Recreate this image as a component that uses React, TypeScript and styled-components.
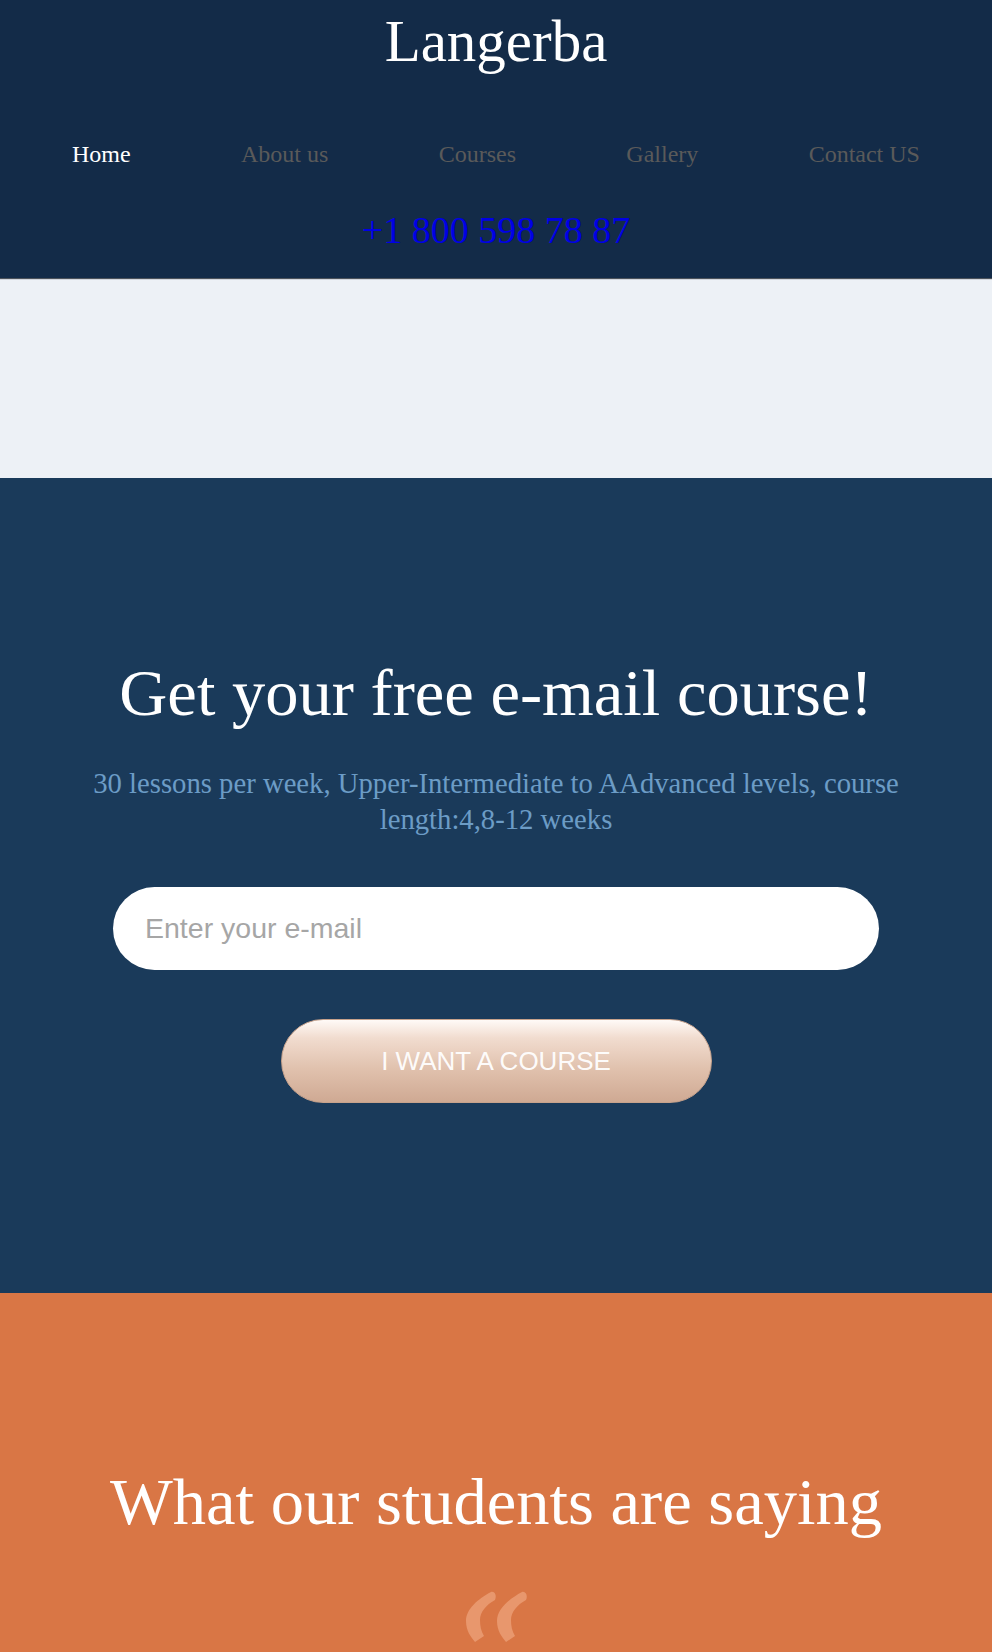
import styled, { createGlobalStyle } from 'styled-components';

const GlobalStyle = createGlobalStyle`
  * {
    box-sizing: border-box;
  }
  body {
    margin: 0;
    font-family: "Liberation Serif", "Times New Roman", serif;
    background: #d97645;
  }
`;

const navItems = ['Home', 'About us', 'Courses', 'Gallery', 'Contact US'];

const Header = styled.header`
  background: #132b48;
  padding: 7px 0 26px;
  display: flex;
  flex-direction: column;
  align-items: center;
  box-shadow: 0 1px 1px rgba(5, 14, 26, 0.7);
  position: relative;
  z-index: 1;
`;

const Logo = styled.h1`
  margin: 0;
  font-size: 59px;
  font-weight: 400;
  line-height: 69px;
  color: #fff;
`;

const Nav = styled.nav`
  width: 100%;
  margin-top: 64px;
  padding: 0 72px;
  display: flex;
  justify-content: space-between;
`;

const NavLink = styled.a<{ $active?: boolean }>`
  font-size: 24px;
  line-height: 28px;
  color: ${(p) => (p.$active ? '#fff' : '#5a5a5a')};
  text-decoration: none;
`;

const Phone = styled.a`
  margin-top: 40px;
  font-size: 38px;
  line-height: 44px;
  color: #0000e6;
  text-decoration: none;
`;

const Band = styled.div`
  height: 200px;
  background: #edf1f6;
`;

const Promo = styled.section`
  background: #1a3a5a;
  padding: 177px 0 190px;
  display: flex;
  flex-direction: column;
  align-items: center;
`;

const Title = styled.h2`
  margin: 0;
  font-size: 66.5px;
  font-weight: 400;
  line-height: 75px;
  color: #fff;
  text-align: center;
`;

const Subtitle = styled.p`
  margin: 35px 0 0;
  padding: 0 70px;
  font-size: 28.7px;
  line-height: 36px;
  color: #6c9cc6;
  text-align: center;
`;

const Form = styled.form`
  margin-top: 50px;
  display: flex;
  flex-direction: column;
  align-items: center;
  gap: 49px;
`;

const EmailInput = styled.input`
  width: 766px;
  height: 83px;
  border: none;
  border-radius: 42px;
  background: #fff;
  padding: 0 32px;
  font-family: "Liberation Sans", Arial, sans-serif;
  font-size: 28.5px;
  color: #333;
  outline: none;

  &::placeholder {
    color: #a6a6a6;
  }
`;

const CourseButton = styled.button`
  width: 431px;
  height: 84px;
  border: 1px solid #c7a28c;
  border-radius: 42px;
  background: linear-gradient(to bottom, #fffaf7 0%, #f1dccf 22%, #e0c1ad 60%, #cfa993 100%);
  font-family: "Liberation Sans", Arial, sans-serif;
  font-size: 26px;
  color: rgba(255, 255, 255, 0.96);
  cursor: pointer;
`;

const Reviews = styled.section`
  background: #d97645;
  padding: 171px 0 20px;
  display: flex;
  flex-direction: column;
  align-items: center;
`;

const QuoteMark = styled.svg`
  margin-top: 52px;
  display: block;
`;

export default function App() {
  return (
    <>
      <GlobalStyle />
      <Header>
        <Logo>Langerba</Logo>
        <Nav>
          {navItems.map((item, i) => (
            <NavLink key={item} href="#" $active={i === 0}>
              {item}
            </NavLink>
          ))}
        </Nav>
        <Phone href="tel:+18005987887">+1 800 598 78 87</Phone>
      </Header>

      <Band />

      <Promo>
        <Title>Get your free e-mail course!</Title>
        <Subtitle>
          30 lessons per week, Upper-Intermediate to AAdvanced levels, course length:4,8-12 weeks
        </Subtitle>
        <Form onSubmit={(e) => e.preventDefault()}>
          <EmailInput type="email" placeholder="Enter your e-mail" />
          <CourseButton type="submit">I WANT A COURSE</CourseButton>
        </Form>
      </Promo>

      <Reviews>
        <Title>What our students are saying</Title>
        <QuoteMark width="64" height="52" viewBox="0 0 64 52">
          <g fill="#e8976d">
            <path d="M27 1 C14 8 2 18 2 30 C2 40 7 46 11 51 L20 45 C17 40 16 35 16 29 C16 21 22 14 31 9 C33 5 31 0 27 1 Z" />
            <path d="M58 1 C45 8 33 18 33 30 C33 40 38 46 42 51 L51 45 C48 40 47 35 47 29 C47 21 53 14 62 9 C64 5 62 0 58 1 Z" />
          </g>
        </QuoteMark>
      </Reviews>
    </>
  );
}
